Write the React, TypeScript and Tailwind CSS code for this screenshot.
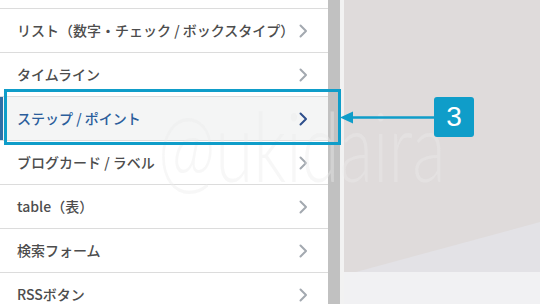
const items = [
  'リスト（数字・チェック / ボックスタイプ）',
  'タイムライン',
  'ステップ / ポイント',
  'ブログカード / ラベル',
  'table（表）',
  '検索フォーム',
  'RSSボタン',
];

const ACTIVE = 2;

const Chevron = ({ active }: { active: boolean }) => (
  <svg width="9" height="14" viewBox="0 0 9 14" fill="none">
    <polyline
      points="1.5,1.5 7,7 1.5,12.5"
      stroke={active ? '#2e4f8c' : '#a3a9b0'}
      strokeWidth="2"
      strokeLinecap="round"
      strokeLinejoin="round"
    />
  </svg>
);

const App = () => {
  return (
    <div className="relative w-[540px] h-[304px] overflow-hidden flex bg-[#dfdbdb] font-['Noto_Sans_CJK_JP',sans-serif]">
      {/* メニュー一覧 */}
      <div className="w-[328px] shrink-0 bg-white flex flex-col">
        <div className="h-[9px] shrink-0 border-b border-[#dcdcdc]"></div>
        {items.map((label, i) => (
          <div
            key={label}
            className={`relative h-[44px] shrink-0 border-b border-[#dcdcdc] flex items-center justify-between pl-[17px] pr-[20px] ${
              i === ACTIVE ? 'bg-[#f4f5f5]' : ''
            }`}
          >
            {i === ACTIVE && <div className="absolute left-0 top-0 bottom-0 w-[3px] bg-[#2f6ea6]"></div>}
            <span
              className={`text-[14px] font-medium ${
                i === ACTIVE ? 'text-[#2b5e9c]' : 'text-[#4d4d4d]'
              }`}
            >
              {label}
            </span>
            <Chevron active={i === ACTIVE} />
          </div>
        ))}
      </div>

      {/* スクロールバー */}
      <div className="w-[12px] shrink-0 bg-[#c1c1c1]"></div>
      <div className="w-[4px] shrink-0 bg-[#f2f2f2]"></div>

      {/* プレビュー */}
      <div className="flex-1 flex flex-col">
        <div className="relative flex-1">
          <svg className="absolute left-0 bottom-0" width="196" height="50" viewBox="0 0 196 50">
            <polygon points="12,50 196,0 196,50" fill="#e3e2e6" />
          </svg>
        </div>
        <div className="h-[32px] bg-[#f1f1f3]"></div>
      </div>

      {/* 透かし */}
      <div className="absolute left-[158px] top-[97px] pointer-events-none origin-left scale-x-[0.72] text-[96px] leading-none font-light font-['Lato',sans-serif] text-[rgba(236,236,236,0.4)] whitespace-nowrap">
        @ukidaira
      </div>

      {/* 注釈 */}
      <div className="absolute left-[4px] top-[89px] w-[337px] h-[56px] border-[3px] border-[#0f9dc9]"></div>
      <svg className="absolute left-[340px] top-[110px]" width="96" height="15" viewBox="0 0 96 15">
        <line x1="10" y1="7.5" x2="96" y2="7.5" stroke="#0f9dc9" strokeWidth="2.5" />
        <polygon points="0,7.5 13,1.5 13,13.5" fill="#0f9dc9" />
      </svg>
      <div className="absolute left-[434px] top-[97px] w-[40px] h-[40px] rounded-[3px] bg-[#0f9dc9] flex items-center justify-center text-white text-[28px] font-['Liberation_Sans',sans-serif]">
        3
      </div>
    </div>
  );
};

export default App;
